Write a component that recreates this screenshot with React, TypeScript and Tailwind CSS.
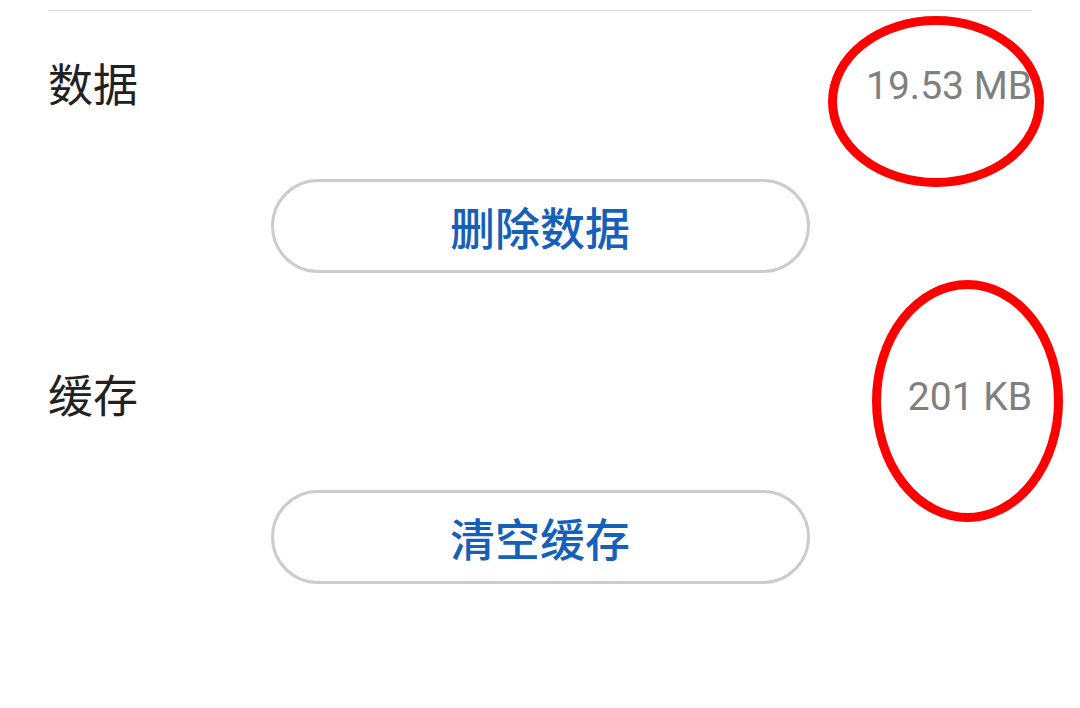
const cjk = { fontFamily: '"Noto Sans CJK SC", "Noto Sans", sans-serif' }
const num = { fontFamily: 'Roboto, "Liberation Sans", sans-serif' }

function Section({ label, value, action, gapTop }: { label: string; value: string; action: string; gapTop: string }) {
  return (
    <div className={gapTop}>
      <div className="flex h-[150px] items-center justify-between">
        <span className="mb-[7px] text-[45px] leading-none text-[#212121]" style={cjk}>
          {label}
        </span>
        <span className="text-[39px] leading-none text-[#808080]" style={num}>
          {value}
        </span>
      </div>
      <div className="mt-[18px] flex justify-center">
        <button
          className="flex h-[94px] w-[539px] items-center justify-center rounded-full border-[3px] border-[#cccccc] bg-white text-[45px] font-medium leading-none text-[#1560b8]"
          style={cjk}
        >
          {action}
        </button>
      </div>
    </div>
  )
}

// hand-drawn red annotation circles
function Ring({ cx, cy, rx, ry, className }: { cx: number; cy: number; rx: number; ry: number; className: string }) {
  return (
    <svg className={`pointer-events-none absolute ${className}`} viewBox={`0 0 ${cx * 2} ${cy * 2}`} fill="none">
      <ellipse cx={cx} cy={cy} rx={rx} ry={ry} stroke="#ff0000" strokeWidth="9" />
    </svg>
  )
}

export default function App() {
  return (
    <div className="relative h-[708px] w-[1080px] overflow-hidden bg-white">
      <div className="px-12 pt-[10px]">
        <div className="h-px bg-[#d6d6d6]" />
        <Section label="数据" value="19.53 MB" action="删除数据" gapTop="" />
        <Section label="缓存" value="201 KB" action="清空缓存" gapTop="mt-[49px]" />
      </div>
      <Ring cx={108} cy={85.5} rx={103.5} ry={81} className="left-[828px] top-[16px] h-[171px] w-[216px]" />
      <Ring cx={95.5} cy={121} rx={91} ry={116.5} className="left-[872px] top-[280px] h-[242px] w-[191px]" />
    </div>
  )
}
